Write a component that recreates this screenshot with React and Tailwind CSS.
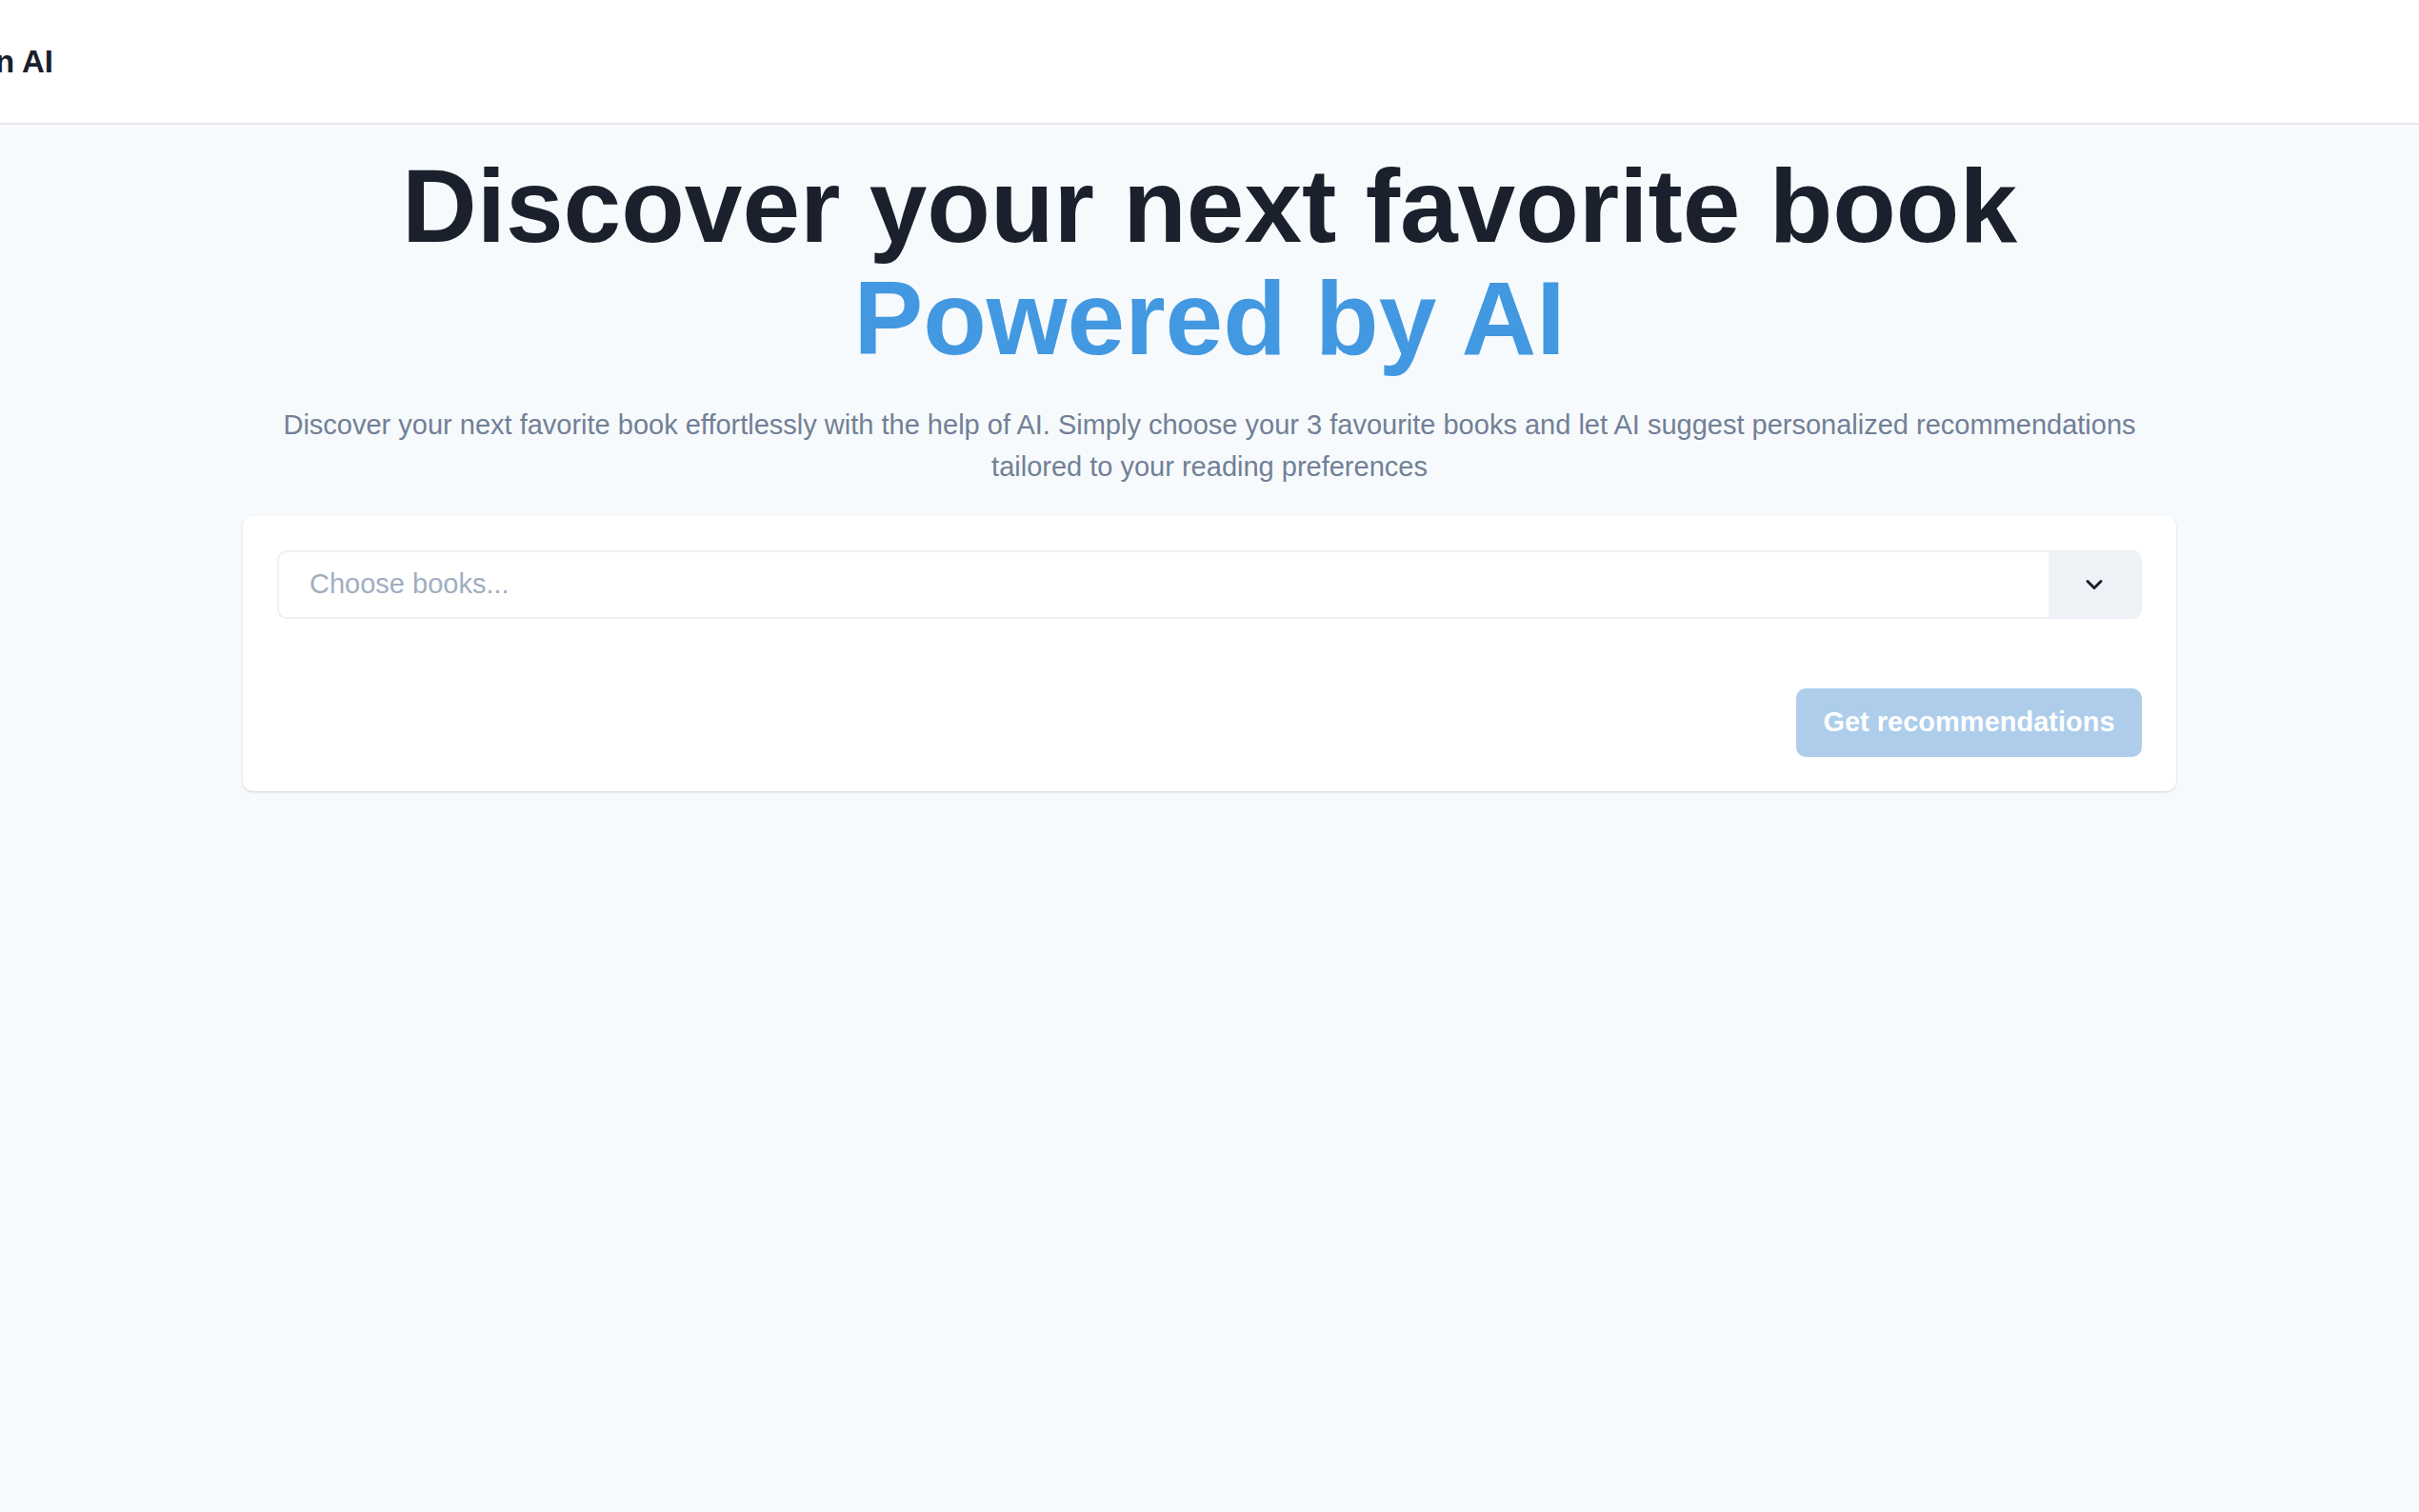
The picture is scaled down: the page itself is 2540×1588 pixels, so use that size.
export default function App() {
  return (
    <div className="min-h-screen bg-[#f7fafc] font-['Liberation_Sans',Arial,sans-serif]">
      {/* Header */}
      <header className="h-[131px] bg-white border-b-2 border-[#e6e8eb] flex items-center overflow-hidden">
        <div className="w-[56px] overflow-hidden flex justify-end shrink-0">
          <span className="whitespace-nowrap text-[33px] font-bold text-[#1a202c]">
            Book Recommendation AI
          </span>
        </div>
      </header>

      <main className="flex flex-col items-center pt-[26px]">
        <h1 className="text-center text-[109px] leading-[118px] font-bold text-[#1a202c]">
          Discover your next favorite book
          <br />
          <span className="text-[#4299e1]">Powered by AI</span>
        </h1>

        <p className="mt-[31px] w-[1990px] text-center text-[29px] leading-[44px] text-[#718096]">
          Discover your next favorite book effortlessly with the help of AI. Simply choose your 3 favourite books and let AI suggest personalized recommendations tailored to your reading preferences
        </p>

        {/* Card */}
        <div className="mt-[30px] w-[2030px] bg-white rounded-[10px] shadow-[0_1px_3px_rgba(0,0,0,0.1),0_1px_2px_rgba(0,0,0,0.06)] p-[36px] flex flex-col">
          <div className="h-[72px] flex border-2 border-[#edf0f4] rounded-[10px] overflow-hidden">
            <div className="flex-1 flex items-center pl-[32px] text-[29px] text-[#a0aec0]">
              Choose books...
            </div>
            <div className="w-[96px] bg-[#edf2f7] flex items-center justify-center">
              <svg width="20" height="12" viewBox="0 0 20 12" fill="none">
                <path d="M3 2.5l7 7 7-7" stroke="#1a202c" strokeWidth="3" strokeLinecap="round" strokeLinejoin="round" />
              </svg>
            </div>
          </div>

          <div className="mt-[73px] flex justify-end">
            <button className="h-[72px] w-[363px] rounded-[10px] bg-[#adcdeb] text-white text-[29px] font-bold">
              Get recommendations
            </button>
          </div>
        </div>
      </main>
    </div>
  );
}
